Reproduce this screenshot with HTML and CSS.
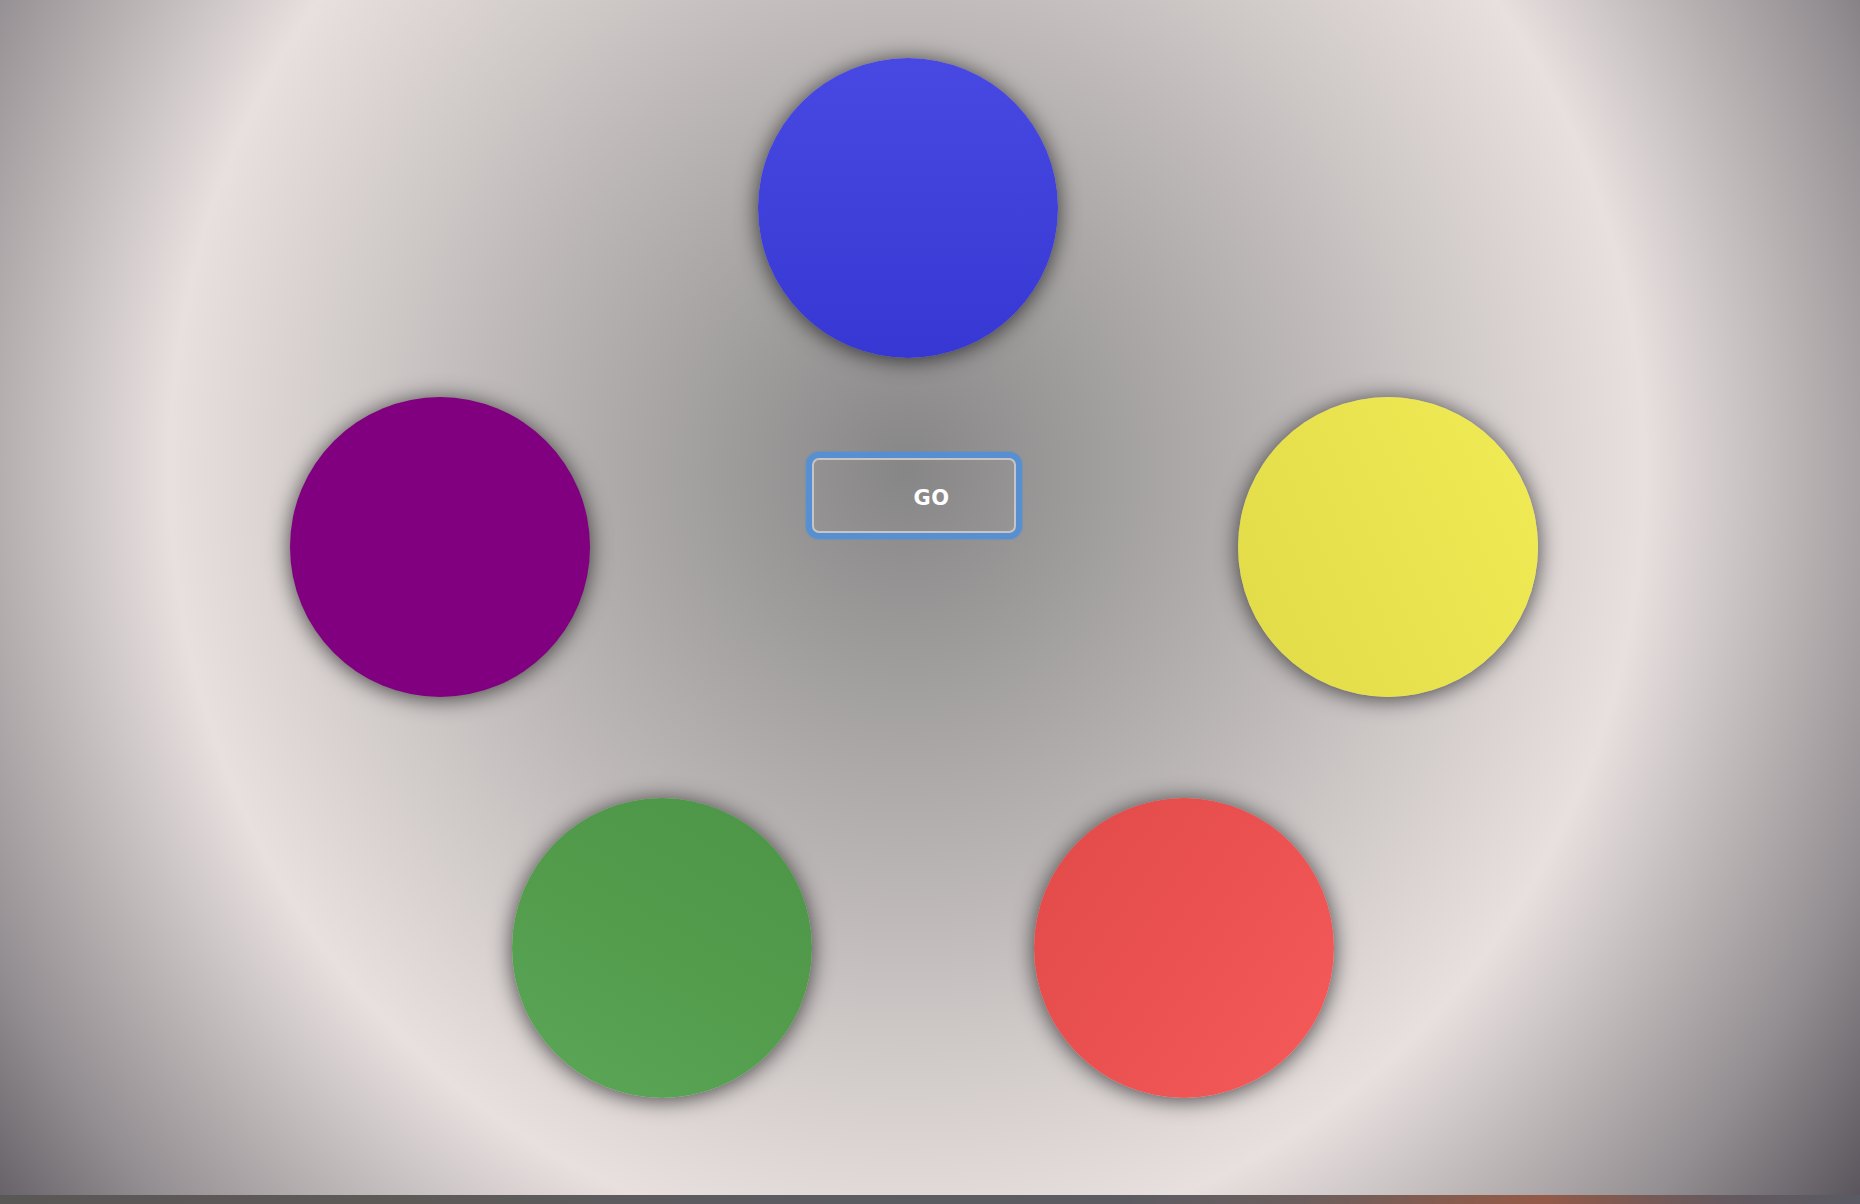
FILE: index.html
```html
<!DOCTYPE html>
<html lang="en">
<head>
<meta charset="utf-8">
<title>Simon</title>
<link rel="stylesheet" href="styles.css">
</head>
<body>
<main class="board">
  <div class="row row-top">
    <div class="pad pad-blue"></div>
  </div>
  <div class="row row-mid">
    <div class="pad pad-purple"></div>
    <button class="go" type="button">GO</button>
    <div class="pad pad-yellow"></div>
  </div>
  <div class="row row-bottom">
    <div class="pad pad-green"></div>
    <div class="pad pad-red"></div>
  </div>
</main>
<div class="dock-strip"></div>
</body>
</html>
```

FILE: styles.css
```css
html, body {
  margin: 0;
  padding: 0;
}

body {
  width: 1860px;
  height: 1204px;
  overflow: hidden;
  font-family: "Liberation Sans", Arial, sans-serif;
  display: flex;
  flex-direction: column;
  background: #5a5858;
}

.board {
  height: 1195px;
  box-sizing: border-box;
  padding-top: 58px;
  display: flex;
  flex-direction: column;
  background: radial-gradient(ellipse 738px 780px at 907px 470px,
    #878686 0%,
    #e8e0df 100%,
    #938e91 138%,
    #58535a 160%);
}

.row {
  display: flex;
  justify-content: center;
  box-sizing: border-box;
  width: 1860px;
}

.row-top {
  padding-right: 44px;
}

.row-mid {
  margin-top: 39px;
  padding-right: 32px;
  gap: 222px;
  align-items: flex-start;
}

.row-bottom {
  margin-top: 101px;
  padding-right: 14px;
  gap: 222px;
}

.pad {
  width: 300px;
  height: 300px;
  border-radius: 50%;
  flex: none;
  box-shadow: 0 2px 22px rgba(0, 0, 0, 0.68);
}

.pad-blue {
  background: linear-gradient(to bottom, #4848e2, #3737d3);
}

.pad-purple {
  background: #800080;
}

.pad-yellow {
  background: linear-gradient(65deg, #e0db48 0%, #e6e14c 40%, #f1ec56 100%);
}

.pad-green {
  background: linear-gradient(30deg, #5ca858 0%, #529c4c 50%, #4d9547 100%);
}

.pad-red {
  background: linear-gradient(125deg, #e2494a 0%, #ea5150 50%, #f65b5a 100%);
}

.go {
  margin-top: 61px;
  width: 204px;
  height: 75px;
  box-sizing: border-box;
  border: 2px solid #c6c4c4;
  border-radius: 7px;
  background: transparent;
  color: #ffffff;
  font-family: "DejaVu Sans", "Liberation Sans", sans-serif;
  font-weight: 700;
  font-size: 21px;
  letter-spacing: 0.5px;
  padding: 4px 0 0 35px;
  box-shadow: 0 0 0 6px rgba(84, 143, 212, 0.95), 0 0 1px 7px rgba(84, 143, 212, 0.35);
  cursor: pointer;
}

.dock-strip {
  height: 9px;
  background: linear-gradient(to right,
    #5a5757 0%,
    #5e5a58 22%,
    #5b5b62 45%,
    #5c5b62 60%,
    #6c5e5d 70%,
    #8d5b4b 80%,
    #935a48 83%,
    #7a5a55 88%,
    #645a60 93%,
    #5a5a64 100%);
}
```
